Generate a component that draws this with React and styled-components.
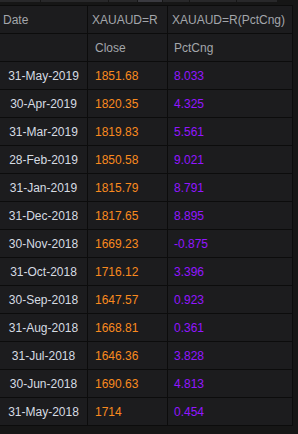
import styled, { createGlobalStyle } from "styled-components";

const GlobalStyle = createGlobalStyle`
  html, body {
    margin: 0;
    padding: 0;
    background: #161616;
  }
  body {
    font-family: "Liberation Sans", Arial, sans-serif;
    width: 298px;
    height: 434px;
    overflow: hidden;
  }
`;

const Page = styled.div`
  display: flex;
  flex-direction: column;
  gap: 3px;
`;

const TabStrip = styled.div`
  display: flex;
  height: 2px;
  gap: 1px;
  padding-right: 14px;
`;

const Tab = styled.div`
  height: 2px;
  width: ${(p) => p.w}px;
  background: ${(p) => (p.active ? "#3a3a40" : "#28282a")};
`;

const Table = styled.div`
  display: grid;
  grid-template-columns: 87px 80px 125px;
  width: 293px;
  border-right: 1px solid #0c0c0c;
  border-bottom: 1px solid #0c0c0c;
  box-sizing: border-box;
`;

const Cell = styled.div`
  height: 28px;
  box-sizing: border-box;
  background: #1c1c1e;
  border-top: 1px solid #0c0c0c;
  border-left: ${(p) => (p.first ? "none" : "1px solid #0c0c0c")};
  display: flex;
  align-items: center;
  justify-content: ${(p) => (p.center ? "center" : "flex-start")};
  padding-left: ${(p) => (p.center ? 0 : p.pad || 5)}px;
  font-size: 12px;
  white-space: nowrap;
  overflow: hidden;
  color: ${(p) => p.color || "#a3a6ab"};
`;

const rows = [
  ["31-May-2019", "1851.68", "8.033"],
  ["30-Apr-2019", "1820.35", "4.325"],
  ["31-Mar-2019", "1819.83", "5.561"],
  ["28-Feb-2019", "1850.58", "9.021"],
  ["31-Jan-2019", "1815.79", "8.791"],
  ["31-Dec-2018", "1817.65", "8.895"],
  ["30-Nov-2018", "1669.23", "-0.875"],
  ["31-Oct-2018", "1716.12", "3.396"],
  ["30-Sep-2018", "1647.57", "0.923"],
  ["31-Aug-2018", "1668.81", "0.361"],
  ["31-Jul-2018", "1646.36", "3.828"],
  ["30-Jun-2018", "1690.63", "4.813"],
  ["31-May-2018", "1714", "0.454"],
];

const tabs = [
  { w: 40 },
  { w: 67 },
  { w: 28 },
  { w: 24, active: true },
  { w: 26 },
  { w: 46 },
  { w: 40 },
];

export default function App() {
  return (
    <Page>
      <GlobalStyle />
      <TabStrip>
        {tabs.map((t, i) => (
          <Tab key={i} w={t.w} active={t.active} />
        ))}
      </TabStrip>
      <Table>
        <Cell first pad={3}>Date</Cell>
        <Cell pad={4}>XAUAUD=R</Cell>
        <Cell pad={4}>XAUAUD=R(PctCng)</Cell>
        <Cell first />
        <Cell pad={7}>Close</Cell>
        <Cell pad={6}>PctCng</Cell>
        {rows.map((r) => [
          <Cell key={r[0] + "d"} first center color="#d6dbe2">
            {r[0]}
          </Cell>,
          <Cell key={r[0] + "c"} pad={7} color="#f98a1f">
            {r[1]}
          </Cell>,
          <Cell key={r[0] + "p"} pad={6} color="#9316ff">
            {r[2]}
          </Cell>,
        ])}
      </Table>
    </Page>
  );
}
